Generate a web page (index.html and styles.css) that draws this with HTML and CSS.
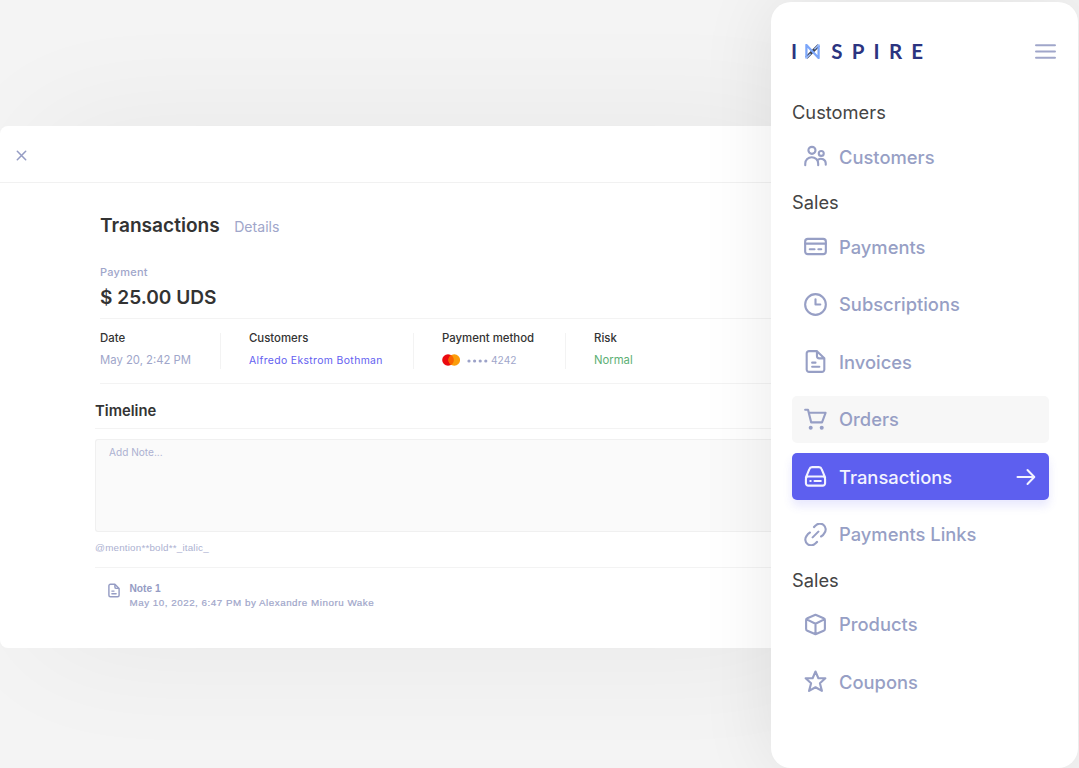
FILE: index.html
```html
<!DOCTYPE html>
<html lang="en">
<head>
  <meta charset="UTF-8" />
  <meta name="viewport" content="width=device-width, initial-scale=1.0">
  <title>Inspire - Transactions</title>
  <link rel="stylesheet" href="styles.css">
</head>
<body>
  <main class="card">
    <div class="card-top">
      <svg class="close" viewBox="0 0 10 10"><path d="M1.200 1.200l7.600 7.600M8.800 1.200l-7.600 7.600" /></svg>
    </div>

    <div class="content">
      <section class="summary">
        <div class="title">
          <h1>Transactions</h1>
          <span>Details</span>
        </div>
        <p class="label">Payment</p>
        <p class="amount">$ 25.00 UDS</p>

        <div class="info">
          <div class="col col-date">
            <h4>Date</h4>
            <p class="date">May 20, 2:42 PM</p>
          </div>
          <div class="col col-customer">
            <h4>Customers</h4>
            <p class="link">Alfredo Ekstrom Bothman</p>
          </div>
          <div class="col col-method">
            <h4>Payment method</h4>
            <p class="method">
              <svg class="mastercard" viewBox="0 0 18 12">
                <circle cx="6" cy="6" r="5.8" fill="#eb0a0f" />
                <circle cx="12.3" cy="6" r="5.8" fill="#fb9d0b" />
                <path d="M9.15 1.1a5.8 5.8 0 0 1 0 9.8a5.8 5.8 0 0 1 0-9.8z" fill="#f96302" />
              </svg>
              <svg class="dots" viewBox="0 0 22 4">
                <circle cx="2" cy="2" r="1.6" /><circle cx="7.6" cy="2" r="1.6" /><circle cx="13.2" cy="2" r="1.6" /><circle cx="18.8" cy="2" r="1.6" />
              </svg>
              <span>4242</span>
            </p>
          </div>
          <div class="col col-risk">
            <h4>Risk</h4>
            <p class="normal">Normal</p>
          </div>
        </div>
      </section>

      <section class="timeline">
        <h2>Timeline</h2>
        <div class="note-box">Add Note...</div>
        <p class="hint">@mention**bold**_italic_</p>
        <div class="note">
          <svg class="note-icon" viewBox="0 0 20 24"><path d="M11.500 1.500H4A2.500 2.500 0 0 0 1.500 4v16A2.500 2.500 0 0 0 4 22.500h12a2.500 2.500 0 0 0 2.500-2.500V8.500zM11.500 1.500V6A2.500 2.500 0 0 0 14 8.500h4.500M6.500 13h3.500M6.500 17.500h7" /></svg>
          <div>
            <h5>Note 1</h5>
            <p>May 10, 2022, 6:47 PM by Alexandre Minoru Wake</p>
          </div>
        </div>
      </section>
    </div>
  </main>

  <aside class="sidebar">
    <header class="brand">
      <div class="logo">
        <span>I</span>
        <svg viewBox="0 0 16 16">
          <path d="M1.500 14.500L14.500 1.500" stroke="#3b4150" stroke-width="3.200" />
          <path d="M1.500 15.500V1l13 14V.500" stroke="#7ba6fa" stroke-width="2.400" />
          <path d="M1.500 15l4.500-4.500M14.500 1L10 5.500" stroke="#9dbdfc" stroke-width="1.600" />
        </svg>
        <span>SPIRE</span>
      </div>
      <svg class="menu" viewBox="0 0 20 16"><path d="M1 2h18M1 8h18M1 14h18" /></svg>
    </header>

    <nav>
      <h3>Customers</h3>
      <a class="item">
        <svg viewBox="0 0 24 24"><circle cx="8.300" cy="5.600" r="3.700" /><circle cx="18" cy="8.800" r="2.600" /><path d="M1.300 21v-1.500a6.500 6.500 0 0 1 13.500 0V21M14.800 15.300a5 5 0 0 1 7.900 4V20.500" /></svg>
        <span>Customers</span>
      </a>

      <h3>Sales</h3>
      <a class="item">
        <svg viewBox="0 0 24 24"><rect x="1.200" y="4" width="21.600" height="16" rx="2.800" /><path d="M1.200 9h21.600M6 14.800h5M15 14.800h3" /></svg>
        <span>Payments</span>
      </a>
      <a class="item">
        <svg viewBox="0 0 24 24"><circle cx="12" cy="12" r="10.800" /><path d="M12 6.500V12h5" /></svg>
        <span>Subscriptions</span>
      </a>
      <a class="item">
        <svg viewBox="0 0 24 24"><path d="M13.500 1.200H5.300a2.500 2.500 0 0 0-2.500 2.500v16.600a2.500 2.500 0 0 0 2.500 2.500h13.400a2.500 2.500 0 0 0 2.500-2.500V8.700zM13.500 1.200v5a2.500 2.500 0 0 0 2.500 2.500h5.200M8.500 13.200h3.500M8.500 17.500h7.500" /></svg>
        <span>Invoices</span>
      </a>
      <a class="item hover">
        <svg viewBox="0 0 24 24"><path d="M1.200 1.800h3l3.300 13.200h11.300l3.700-10H5" /><circle class="dot" cx="7" cy="20.600" r="2.100" /><circle class="dot" cx="18.500" cy="20.600" r="2.100" /></svg>
        <span>Orders</span>
      </a>
      <a class="item active">
        <svg viewBox="0 0 24 24"><path d="M2 13L5.600 4.200A3 3 0 0 1 8.400 2.200h7.200a3 3 0 0 1 2.800 2L22 13M4.500 12h15a2.500 2.500 0 0 1 2.500 2.500V19a2.500 2.500 0 0 1-2.500 2.500h-15A2.500 2.500 0 0 1 2 19v-4.500A2.500 2.500 0 0 1 4.500 12zM6.600 16.700h.4M11 16.700h6.500" /></svg>
        <span>Transactions</span>
        <svg class="arrow" viewBox="0 0 20 20"><path d="M1.500 10h16.500M11.500 3l6.800 7-6.800 7" /></svg>
      </a>
      <a class="item">
        <svg viewBox="0 0 24 24"><path d="M9 15l6-6M10.400 4.300l1.700-1.600a6 6 0 0 1 9.200 7.700a8 8 0 0 1-3.500 3.700M6.200 9.900a8 8 0 0 0-3.500 3.700a6 6 0 0 0 9.200 7.700l1.700-1.600" /></svg>
        <span>Payments Links</span>
      </a>

      <h3>Sales</h3>
      <a class="item">
        <svg viewBox="0 0 24 24"><path d="M12 1.800l8.500 3.700a2 2 0 0 1 1.300 1.900v9.200a2 2 0 0 1-1.300 1.900L12 22.200l-8.500-3.700a2 2 0 0 1-1.300-1.900V7.400a2 2 0 0 1 1.300-1.900zM2.800 6.600L12 11.200l9.200-4.600M12 11.200v11" /></svg>
        <span>Products</span>
      </a>
      <a class="item">
        <svg viewBox="0 0 24 24"><path d="M12 1.600l3 7h7.300l-5.700 5.200 2.100 8L12 18l-6.700 3.800 2.100-8L1.700 8.600H9z" /></svg>
        <span>Coupons</span>
      </a>
    </nav>
  </aside>
</body>
</html>
```
FILE: styles.css
```css
* {
  box-sizing: border-box;
  margin: 0;
  padding: 0;
}

body {
  display: flex;
  height: 768px;
  overflow: hidden;
  font-family: 'Inter', 'Liberation Sans', sans-serif;
  background-color: #f4f4f4;
  color: #333;
}

svg {
  display: block;
  flex: none;
  fill: none;
  stroke-linecap: round;
  stroke-linejoin: round;
}

/* Details card */
.card {
  flex: 1;
  height: 521.5px;
  margin-top: 126px;
  background-color: #fff;
  border-radius: 8px 0 0 8px;
  box-shadow: 40px 0 130px rgba(0, 0, 0, 0.055);
}

.card-top {
  height: 57px;
  padding: 24px 16px;
  border-bottom: 1px solid #f1f1f1;
}

.close {
  width: 11px;
  height: 11px;
  stroke: #959cc4;
  stroke-width: 1.4;
}

.content {
  padding-left: 95px;
}

.summary {
  margin-left: 5px;
  border-bottom: 1px solid #f3f3f3;
}

.title {
  display: flex;
  align-items: baseline;
  gap: 14.5px;
  height: 75px;
  padding-top: 29px;
}

h1 {
  font-size: 19.1px;
  font-weight: 600;
  line-height: 26px;
}

.title span {
  color: #a0a6ca;
  font-size: 14.1px;
}

.label {
  height: 25px;
  padding-top: 7px;
  color: #a0a6ca;
  font-size: 11px;
  font-weight: 500;
  line-height: 14px;
  letter-spacing: 0.25px;
}

.amount {
  height: 35px;
  font-size: 19.1px;
  font-weight: 600;
  line-height: 28px;
}

.info {
  display: flex;
  height: 65px;
  padding: 13px 0;
  border-top: 1px solid #f3f3f3;
}

.col {
  height: 36px;
  margin-top: 1px;
  padding-left: 28px;
  border-left: 1px solid #f3f3f3;
  white-space: nowrap;
}

.col-date {
  width: 120px;
  padding-left: 0;
  border: none;
}

.col-customer {
  width: 193px;
}

.col-method {
  width: 152px;
}

h4 {
  height: 21px;
  font-size: 11.4px;
  font-weight: 500;
  line-height: 11px;
}

.col p {
  font-size: 11.3px;
  line-height: 13px;
}

.col .date {
  color: #a0a6ca;
  letter-spacing: 0;
}

.col .link {
  color: #6360f0;
  font-size: 10.4px;
  letter-spacing: 0.37px;
}

.col .method {
  display: flex;
  align-items: center;
  color: #a0a6ca;
  font-size: 10.2px;
}

.mastercard {
  width: 18px;
  height: 12px;
  margin: -1px 7px 0 0;
}

.dots {
  width: 22px;
  height: 4px;
  margin-right: 2px;
  fill: #9ca2c8;
}

.col .normal {
  color: #5db075;
}

h2 {
  height: 45px;
  padding-top: 17px;
  border-bottom: 1px solid #f3f3f3;
  font-size: 14.8px;
  font-weight: 600;
  line-height: 20px;
}

.note-box {
  height: 93px;
  margin-top: 10px;
  padding: 6px 13px;
  border: 1px solid #f0f0f0;
  border-right: none;
  border-radius: 3px 0 0 3px;
  background-color: #fafafa;
  color: #acb1d1;
  font-size: 10.1px;
  line-height: 13px;
}

.hint {
  height: 36px;
  padding-top: 9px;
  border-bottom: 1px solid #f3f3f3;
  color: #acb1d1;
  font-family: 'Liberation Sans', sans-serif;
  font-size: 9.8px;
  line-height: 13px;
  letter-spacing: 0.2px;
}

.note {
  display: flex;
  gap: 9.5px;
  padding: 14px 13px;
  color: #a0a6ca;
  font-family: 'Liberation Sans', sans-serif;
}

.note-icon {
  width: 12px;
  height: 15px;
  margin-top: 1px;
  stroke: #959cc4;
  stroke-width: 2.4;
}

h5 {
  color: #959cc4;
  font-size: 10.2px;
  font-weight: 700;
  line-height: 14px;
}

.note p {
  font-size: 9.8px;
  font-weight: 400;
  line-height: 14px;
  letter-spacing: 0.52px;
  -webkit-text-stroke: 0.2px currentColor;
}

/* Sidebar */
.sidebar {
  position: relative;
  width: 307px;
  height: 766px;
  margin: 2px 1px 0 0;
  padding: 0 29px 0 21px;
  background-color: #fff;
  border-radius: 20px;
  box-shadow: 0 0 75px rgba(0, 0, 0, 0.09);
}

.brand {
  display: flex;
  align-items: center;
  justify-content: space-between;
  height: 98px;
  margin-right: -7px;
}

.logo {
  display: flex;
  align-items: center;
  margin-left: -1px;
  color: #2b3480;
  font-family: Lato, sans-serif;
  font-size: 20.5px;
  font-weight: 700;
  line-height: 20px;
  letter-spacing: 9.2px;
}

.logo svg {
  width: 15px;
  height: 15px;
  margin: 0 11px 0 -1px;
  stroke-linecap: butt;
}

.menu {
  width: 21px;
  height: 17px;
  stroke: #a0a6ca;
  stroke-width: 2;
}

h3 {
  height: 43px;
  font-size: 18.3px;
  font-weight: 400;
  line-height: 44px;
  color: #444;
}

nav h3:first-child {
  height: 33px;
  line-height: 24px;
}

.item {
  display: flex;
  align-items: center;
  gap: 12px;
  height: 47px;
  padding: 0 12px;
  border-radius: 5px;
  color: #979fc5;
  font-size: 18.35px;
  font-weight: 500;
}

.item + .item {
  margin-top: 10.5px;
}

.item svg {
  width: 23px;
  height: 23px;
  stroke: currentColor;
  stroke-width: 2.2;
}

.item .dot {
  fill: currentColor;
  stroke: none;
}

.item.hover {
  background-color: #f7f7f7;
}

.item.active {
  background-color: #5d5fef;
  box-shadow: 0 6px 10px rgba(93, 95, 239, 0.14);
  color: #f3f3ff;
}

.item .arrow {
  width: 20px;
  height: 20px;
  margin: 0 1px 0 auto;
  stroke-width: 2;
}
```
